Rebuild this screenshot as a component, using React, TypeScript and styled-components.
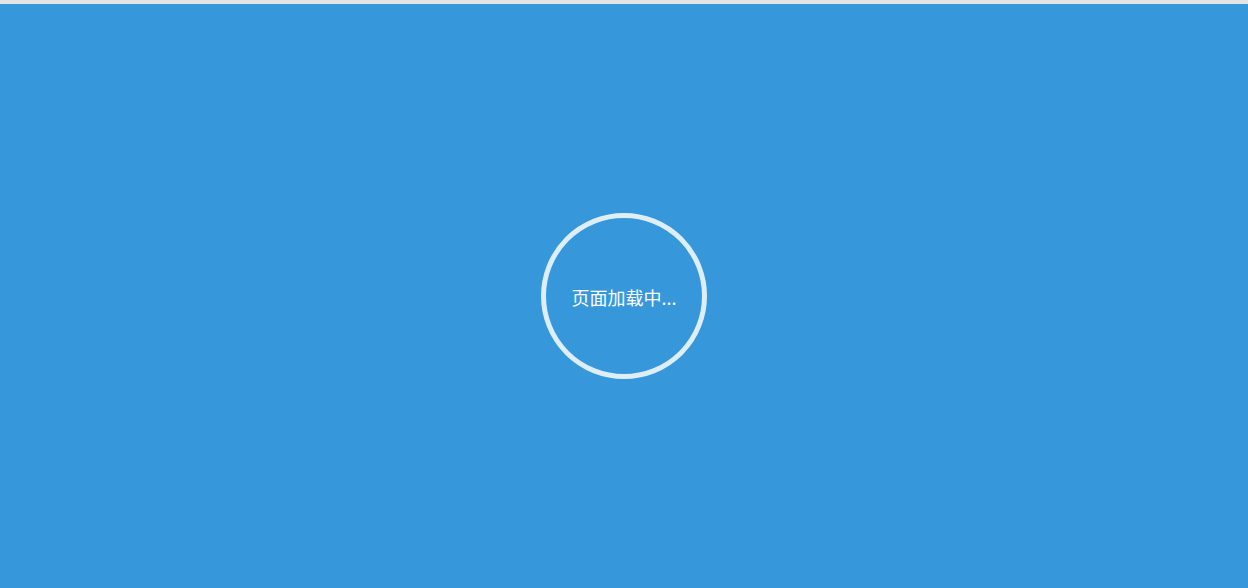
import styled, { createGlobalStyle } from 'styled-components'

const GlobalStyle = createGlobalStyle`
  html, body {
    margin: 0;
    padding: 0;
    background: #e4e4e4;
  }
  body {
    font-family: "Noto Sans CJK SC", "Noto Sans", sans-serif;
  }
`

const Page = styled.div`
  padding-top: 4px;
  height: 100vh;
  box-sizing: border-box;
`

const Overlay = styled.div`
  height: 100%;
  background: #3698db;
  display: flex;
  align-items: center;
  justify-content: center;
`

const Ring = styled.div`
  width: 166px;
  height: 166px;
  box-sizing: border-box;
  border: 5px solid rgba(236, 245, 252, 0.92);
  border-radius: 50%;
  display: flex;
  align-items: center;
  justify-content: center;
`

const Label = styled.span`
  color: #ffffff;
  font-size: 18px;
  line-height: 1;
  padding-top: 2px;
`

export default function App() {
  return (
    <>
      <GlobalStyle />
      <Page>
        <Overlay>
          <Ring>
            <Label>页面加载中...</Label>
          </Ring>
        </Overlay>
      </Page>
    </>
  )
}
